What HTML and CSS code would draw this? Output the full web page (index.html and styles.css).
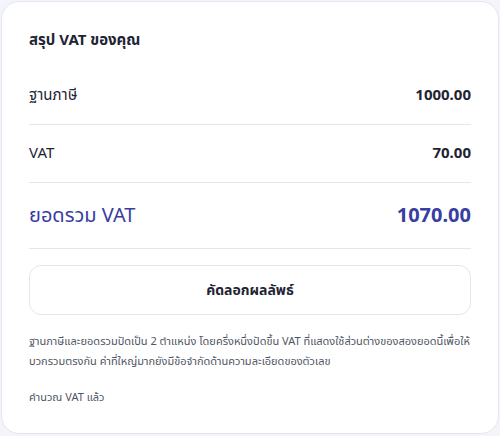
FILE: index.html
```html
<!DOCTYPE html>
<html lang="th">
<head>
    <meta charset="UTF-8">
    <meta name="viewport" content="width=device-width, initial-scale=1.0">
    <title>สรุป VAT</title>
    <link rel="stylesheet" href="styles.css">
</head>
<body>
    <main class="summary">
        <h2 class="summary__title">สรุป VAT ของคุณ</h2>

        <div class="summary__row">
            <span>ฐานภาษี</span>
            <strong>1000.00</strong>
        </div>
        <div class="summary__row">
            <span>VAT</span>
            <strong>70.00</strong>
        </div>
        <div class="summary__row summary__row--total">
            <span>ยอดรวม VAT</span>
            <strong>1070.00</strong>
        </div>

        <button class="summary__copy">คัดลอกผลลัพธ์</button>

        <p class="summary__note">ฐานภาษีและยอดรวมปัดเป็น 2 ตำแหน่ง โดยครึ่งหนึ่งปัดขึ้น VAT ที่แสดงใช้ส่วนต่างของสองยอดนี้เพื่อให้บวกรวมตรงกัน ค่าที่ใหญ่มากยังมีข้อจำกัดด้านความละเอียดของตัวเลข</p>
        <p class="summary__status">คำนวณ VAT แล้ว</p>
    </main>
</body>
</html>
```

FILE: styles.css
```css
body {
    margin: 0;
    padding: 1px;
    background-color: #f4f5fa;
    font-family: 'Noto Sans', 'Noto Sans Thai', 'Noto Sans Thai UI', sans-serif;
    color: #1e2433;
}

.summary {
    display: flex;
    flex-direction: column;
    padding: 26px 27px 26px;
    background-color: #fff;
    border: 1px solid #e3e5f0;
    border-radius: 18px;
}

.summary__title {
    margin: 0 0 17px;
    font-size: 15px;
    line-height: 22px;
    font-weight: 700;
}

.summary__row {
    display: flex;
    justify-content: space-between;
    align-items: center;
    padding: 16px 0 19px;
    font-size: 15px;
    line-height: 22px;
    border-bottom: 1px solid #e3e5f0;
}

.summary__row strong {
    font-weight: 700;
}

.summary__row--total {
    padding: 17px 0 18px;
    font-size: 20px;
    line-height: 30px;
    color: #383ea2;
}

.summary__copy {
    margin-top: 16px;
    height: 50px;
    font-family: inherit;
    font-size: 14px;
    font-weight: 700;
    color: #1e2433;
    background-color: #fff;
    border: 1px solid #e3e5f0;
    border-radius: 12px;
    cursor: pointer;
}

.summary__note,
.summary__status {
    margin: 0;
    font-size: 11px;
    line-height: 20px;
    color: #4f5564;
}

.summary__note {
    margin: 16px 0 16px;
}
```
